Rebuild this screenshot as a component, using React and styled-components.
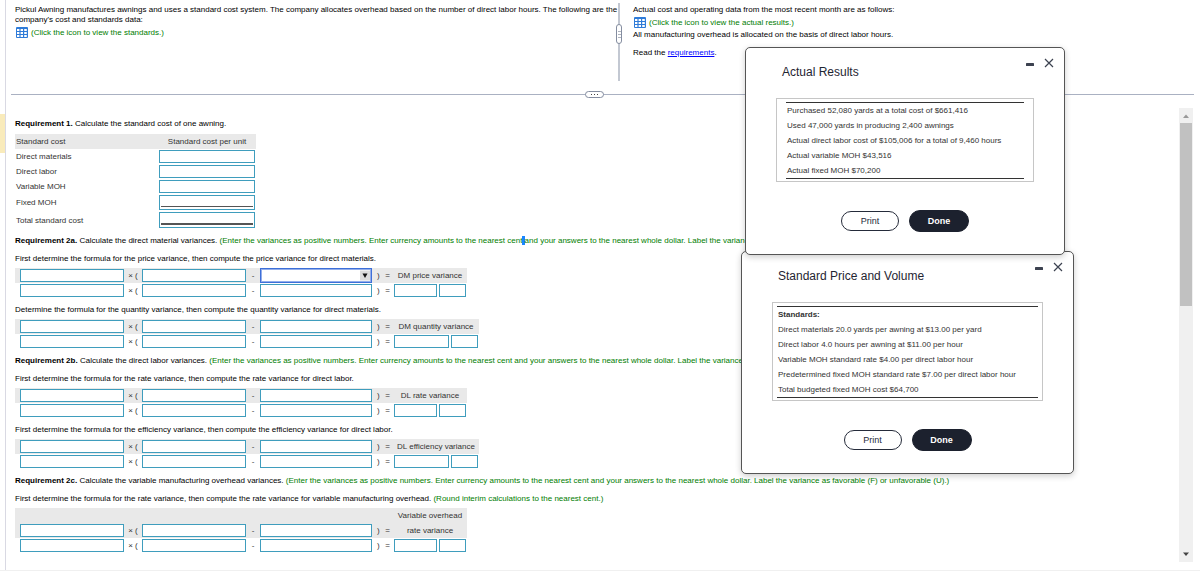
import React from "react";
import styled, { createGlobalStyle } from "styled-components";

const costRows = [
  { label: "Direct materials", height: 15 },
  { label: "Direct labor", height: 15 },
  { label: "Variable MOH", height: 15 },
  { label: "Fixed MOH", height: 17, rule: "single" },
  { label: "Total standard cost", height: 18, rule: "double" },
];

const actualResults = [
  "Purchased 52,080 yards at a total cost of $661,416",
  "Used 47,000 yards in producing 2,400 awnings",
  "Actual direct labor cost of $105,006 for a total of 9,460 hours",
  "Actual variable MOH $43,516",
  "Actual fixed MOH $70,200",
];

const standards = [
  "Direct materials 20.0 yards per awning at $13.00 per yard",
  "Direct labor 4.0 hours per awning at $11.00 per hour",
  "Variable MOH standard rate $4.00 per direct labor hour",
  "Predetermined fixed MOH standard rate $7.00 per direct labor hour",
  "Total budgeted fixed MOH cost $64,700",
];

const TableIcon = () => (
  <svg width="12" height="11" viewBox="0 0 12 11" aria-hidden="true">
    <rect width="12" height="11" rx="1" fill="#2f7bd8" />
    <path
      d="M1 2h2.4v2H1zM4.6 2h2.4v2H4.6zM8.2 2h2.6v2H8.2zM1 5h2.4v2H1zM4.6 5h2.4v2H4.6zM8.2 5h2.6v2H8.2zM1 8h2.4v2H1zM4.6 8h2.4v2H4.6zM8.2 8h2.6v2H8.2z"
      fill="#fff"
    />
  </svg>
);

const Formula = ({ name, lines, wide, open }) => (
  <FormulaBox>
    {lines && (
      <FormulaRow $shaded $wide={wide}>
        <ResultName>{lines[0]}</ResultName>
      </FormulaRow>
    )}
    <FormulaRow $shaded $wide={wide}>
      <Answer aria-label={`${name} term 1`} />
      <Sign>× (</Sign>
      <Answer aria-label={`${name} term 2`} />
      <Sign>-</Sign>
      {open ? (
        <Picker>
          <select aria-label={`${name} term 3`}>
            <option> </option>
          </select>
          <Arrow viewBox="0 0 10 10" aria-hidden="true">
            <rect width="10" height="10" fill="#dcdcdc" />
            <path d="M2.5 3h5L5 7.5z" fill="#111" />
          </Arrow>
        </Picker>
      ) : (
        <Answer aria-label={`${name} term 3`} />
      )}
      <Sign $spread>
        <span>)</span>
        <span>=</span>
      </Sign>
      <ResultName>{lines ? lines[1] : name}</ResultName>
    </FormulaRow>
    <FormulaRow $wide={wide}>
      <Answer aria-label={`${name} amount 1`} />
      <Sign>× (</Sign>
      <Answer aria-label={`${name} amount 2`} />
      <Sign>-</Sign>
      <Answer aria-label={`${name} amount 3`} />
      <Sign $spread>
        <span>)</span>
        <span>=</span>
      </Sign>
      <Result>
        <Answer aria-label={`${name} result`} />
        <Answer aria-label={`${name} F or U`} />
      </Result>
    </FormulaRow>
  </FormulaBox>
);

const WindowButtons = () => (
  <Controls>
    <IconButton aria-label="Minimize">
      <svg width="10" height="10" viewBox="0 0 10 10">
        <rect x="1" y="5" width="8" height="3" rx="0.6" fill="#3c4250" />
      </svg>
    </IconButton>
    <IconButton aria-label="Close">
      <svg width="10" height="10" viewBox="0 0 10 10">
        <path d="M1 1l8 8M9 1L1 9" stroke="#3c4250" strokeWidth="1.2" />
      </svg>
    </IconButton>
  </Controls>
);

const App = () => {
  return (
    <Page>
      <GlobalStyle />
      <Rail>
        <Marker />
      </Rail>
      <Content>
        <Intro>
          <IntroText>
            <p>
              Pickul Awning manufactures awnings and uses a standard cost
              system. The company allocates overhead based on the number of
              direct labor hours. The following are the
              <br />
              company's cost and standards data:
            </p>
            <IconLine>
              <TableIcon /> <Hint>(Click the icon to view the standards.)</Hint>
            </IconLine>
          </IntroText>
          <Splitter>
            <Grip $vertical>
              <i />
              <i />
              <i />
            </Grip>
          </Splitter>
          <IntroText>
            <p>
              Actual cost and operating data from the most recent month are as
              follows:
            </p>
            <IconLine>
              <TableIcon />{" "}
              <Hint>(Click the icon to view the actual results.)</Hint>
            </IconLine>
            <p>
              All manufacturing overhead is allocated on the basis of direct
              labor hours.
            </p>
            <ReadLine>
              Read the <a href="#requirements">requirements</a>.
            </ReadLine>
          </IntroText>
        </Intro>
        <Divider>
          <Grip>
            <i />
            <i />
            <i />
          </Grip>
        </Divider>
        <Lower>
          <Work>
            <Text>
              <b>Requirement 1.</b> Calculate the standard cost of one awning.
            </Text>
            <CostTable>
              <thead>
                <tr>
                  <th>Standard cost</th>
                  <th>Standard cost per unit</th>
                </tr>
              </thead>
              <tbody>
                {costRows.map(({ label, height, rule }) => (
                  <CostRow key={label} $height={height}>
                    <td>{label}</td>
                    <td>
                      <CostCell>
                        <Answer aria-label={label} />
                        {rule && <Rule $double={rule === "double"} />}
                      </CostCell>
                    </td>
                  </CostRow>
                ))}
              </tbody>
            </CostTable>
            <TextBlock>
              <Text>
                <b>Requirement 2a.</b> Calculate the direct material variances.{" "}
                <Hint>
                  (Enter the variances as positive numbers. Enter currency
                  amounts to the nearest cent<Mark> </Mark>and your answers to
                  the nearest whole dollar. Label the variance as favorable (F)
                  or unfavorable (U).)
                </Hint>
              </Text>
              <Text>
                First determine the formula for the price variance, then
                compute the price variance for direct materials.
              </Text>
            </TextBlock>
            <Formula name="DM price variance" open />
            <TextBlock>
              <Text>
                Determine the formula for the quantity variance, then compute
                the quantity variance for direct materials.
              </Text>
            </TextBlock>
            <Formula name="DM quantity variance" wide />
            <TextBlock>
              <Text>
                <b>Requirement 2b.</b> Calculate the direct labor variances.{" "}
                <Hint>
                  (Enter the variances as positive numbers. Enter currency
                  amounts to the nearest cent and your answers to the nearest
                  whole dollar. Label the variance as favorable (F) or
                  unfavorable (U).)
                </Hint>
              </Text>
              <Text>
                First determine the formula for the rate variance, then compute
                the rate variance for direct labor.
              </Text>
            </TextBlock>
            <Formula name="DL rate variance" />
            <TextBlock>
              <Text>
                First determine the formula for the efficiency variance, then
                compute the efficiency variance for direct labor.
              </Text>
            </TextBlock>
            <Formula name="DL efficiency variance" wide />
            <TextBlock>
              <Text>
                <b>Requirement 2c.</b> Calculate the variable manufacturing
                overhead variances.{" "}
                <Hint>
                  (Enter the variances as positive numbers. Enter currency
                  amounts to the nearest cent and your answers to the nearest
                  whole dollar. Label the variance as favorable (F) or
                  unfavorable (U).)
                </Hint>
              </Text>
              <Text>
                First determine the formula for the rate variance, then compute
                the rate variance for variable manufacturing overhead.{" "}
                <Hint>(Round interim calculations to the nearest cent.)</Hint>
              </Text>
            </TextBlock>
            <Formula
              name="Variable overhead rate variance"
              lines={["Variable overhead", "rate variance"]}
            />
          </Work>
          <Scrollbar>
            <svg width="14" height="15" viewBox="0 0 14 15">
              <path d="M4 10l3-3.5L10 10z" fill="#999" />
            </svg>
            <Thumb />
            <svg width="14" height="15" viewBox="0 0 14 15">
              <path d="M4 5.5h6L7 9z" fill="#444" />
            </svg>
          </Scrollbar>
        </Lower>
      </Content>

      <StandardsDialog role="dialog" aria-label="Standard Price and Volume">
        <WindowButtons />
        <DialogTitle>Standard Price and Volume</DialogTitle>
        <StandardsBox>
          <Lines>
            <li>
              <b>Standards:</b>
            </li>
            {standards.map((line) => (
              <li key={line}>{line}</li>
            ))}
          </Lines>
        </StandardsBox>
        <Actions>
          <PrintButton>Print</PrintButton>
          <DoneButton>Done</DoneButton>
        </Actions>
      </StandardsDialog>

      <ActualDialog role="dialog" aria-label="Actual Results">
        <WindowButtons />
        <DialogTitle>Actual Results</DialogTitle>
        <ActualBox>
          <Lines>
            {actualResults.map((line) => (
              <li key={line}>{line}</li>
            ))}
          </Lines>
        </ActualBox>
        <Actions>
          <PrintButton>Print</PrintButton>
          <DoneButton>Done</DoneButton>
        </Actions>
      </ActualDialog>
    </Page>
  );
};

const GlobalStyle = createGlobalStyle`
  * {
    box-sizing: border-box;
  }
  body {
    margin: 0;
    background: #fff;
    color: #000;
    font-family: "Liberation Sans", Arial, sans-serif;
    font-size: 8px;
  }
  p, h2, ul {
    margin: 0;
    padding: 0;
  }
  button, input, select {
    font-family: inherit;
  }
`;

const Page = styled.div`
  position: relative;
  display: flex;
  min-height: 100vh;
  overflow: hidden;
  border-bottom: 1px solid #f0f0f0;
`;
const Rail = styled.aside`
  flex: none;
  width: 6px;
  padding-top: 114px;
  border-right: 1px solid #d9d9e3;
`;
const Marker = styled.div`
  height: 39px;
  background: #f9ebbb;
`;
const Content = styled.main`
  flex: 1;
  min-width: 0;
  padding: 3px 6px 0 5px;
`;
const Intro = styled.section`
  display: grid;
  grid-template-columns: minmax(0, 605fr) 6px minmax(0, 572fr);
  height: 78px;
`;
const IntroText = styled.div`
  padding: 2px 0 0 4px;
  line-height: 10px;
  white-space: nowrap;

  & + div + & {
    padding-left: 11px;
  }
`;
const IconLine = styled.div`
  display: flex;
  align-items: center;
  gap: 3px;
  height: 15px;
  padding-left: 1px;
`;
const Hint = styled.span`
  color: #007d00;
`;
const ReadLine = styled.p`
  margin-top: 8px;

  a {
    color: #0000ff;
  }
`;
const Splitter = styled.div`
  display: flex;
  justify-content: center;
  padding-top: 21px;
  background: linear-gradient(#c3c8d2, #c3c8d2) center / 2px 100% no-repeat;
`;
const Grip = styled.div`
  display: flex;
  flex-direction: ${({ $vertical }) => ($vertical ? "column" : "row")};
  justify-content: center;
  align-items: center;
  gap: 2px;
  width: ${({ $vertical }) => ($vertical ? "6px" : "19px")};
  height: ${({ $vertical }) => ($vertical ? "20px" : "7px")};
  border: 1px solid #848da0;
  border-radius: 4px;
  background: #fff;

  i {
    width: ${({ $vertical }) => ($vertical ? "3px" : "1px")};
    height: 1px;
    background: ${({ $vertical }) => ($vertical ? "#b0b5c0" : "#444")};
  }
`;
const Divider = styled.div`
  display: flex;
  justify-content: center;
  align-items: center;
  height: 27px;
  padding-right: 16px;
  background: linear-gradient(#aab1c2, #aab1c2) center / 100% 1px no-repeat;
`;
const Lower = styled.section`
  display: flex;
`;
const Work = styled.div`
  flex: 1;
  min-width: 0;
  padding: 7px 0 17px 4px;
  overflow: hidden;
`;
const Text = styled.p`
  line-height: 18px;
  white-space: nowrap;
`;
const TextBlock = styled.div`
  padding-top: 3px;
`;
const Mark = styled.span`
  background: #1a86ff;
`;
const Answer = styled.input`
  display: block;
  width: 100%;
  min-width: 0;
  height: 13px;
  padding: 0 2px;
  border: 1px solid #3f9dbd;
  border-radius: 0;
  background: #fff;
  font-size: 8px;
`;
const CostTable = styled.table`
  width: 241px;
  margin-top: 1px;
  border-collapse: collapse;
  color: #333;

  th {
    height: 15px;
    padding: 0 1px;
    background: #e9e9e9;
    font-weight: 400;
    text-align: left;
  }
  th + th {
    width: 98px;
    text-align: center;
  }
  td {
    padding: 0 1px;
  }
`;
const CostRow = styled.tr`
  height: ${({ $height }) => $height}px;

  ${Answer} {
    height: ${({ $height }) => $height - 2}px;
  }
`;
const CostCell = styled.div`
  position: relative;
`;
const Rule = styled.span`
  position: absolute;
  right: 2px;
  bottom: 3px;
  left: 2px;
  border-bottom: ${({ $double }) => ($double ? "2px" : "1px")} solid #555;
`;
const FormulaBox = styled.div`
  display: flex;
  flex-direction: column;
  align-items: flex-start;
  color: #333;
`;
const FormulaRow = styled.div`
  display: grid;
  grid-template-columns: 104px 18px 104px 14px 112px 22px ${({ $wide }) =>
      $wide ? "84px" : "72px"};
  align-items: center;
  height: 15px;
  padding: 0 1px 0 5px;
  background: ${({ $shaded }) => ($shaded ? "#e9e9e9" : "transparent")};
`;
const Sign = styled.span`
  display: flex;
  justify-content: ${({ $spread }) => ($spread ? "space-between" : "center")};
  padding: ${({ $spread }) => ($spread ? "0 4px 0 5px" : "0")};
`;
const ResultName = styled.span`
  grid-column: 7;
  text-align: center;
  white-space: nowrap;
`;
const Result = styled.div`
  display: grid;
  grid-template-columns: 1fr 27px;
  gap: 2px;
`;
const Picker = styled.div`
  position: relative;

  select {
    display: block;
    width: 100%;
    height: 15px;
    border: 1px solid #3d6fd8;
    outline: 1px solid #93aeea;
    outline-offset: -2px;
    border-radius: 0;
    background: #fff;
    appearance: none;
    font-size: 8px;
  }
`;
const Arrow = styled.svg`
  position: absolute;
  top: 2px;
  right: 2px;
  width: 10px;
  height: 11px;
  pointer-events: none;
`;
const Scrollbar = styled.div`
  flex: none;
  display: flex;
  flex-direction: column;
  width: 14px;
  height: calc(100vh - 117px);
  margin-right: 1px;
  background: #f0f0f0;
`;
const Thumb = styled.div`
  height: 183px;
  margin: 0 1px auto;
  background: #c1c1c1;
`;
const Dialog = styled.div`
  position: absolute;
  padding: 10px 30px 22px;
  border: 1px solid #555;
  border-radius: 5px;
  background: #fff;
  box-shadow: 0 2px 6px rgba(0, 0, 0, 0.2);
`;
const ActualDialog = styled(Dialog)`
  top: 47px;
  left: 745px;
  width: 320px;
`;
const StandardsDialog = styled(Dialog)`
  top: 251px;
  left: 741px;
  width: 333px;
`;
const Controls = styled.div`
  display: flex;
  justify-content: flex-end;
  gap: 9px;
  height: 6px;
  margin-right: -20px;
`;
const IconButton = styled.button`
  display: block;
  width: 10px;
  height: 10px;
  padding: 0;
  border: 0;
  background: none;

  svg {
    display: block;
  }
`;
const DialogTitle = styled.h2`
  margin-left: 6px;
  color: #1f2532;
  font-size: 12px;
  font-weight: 400;
  line-height: 16px;
`;
const Box = styled.div`
  margin: 18px 0 28px;
  border: 1px solid #c6c6c6;
`;
const ActualBox = styled(Box)`
  padding: 3px 9px 2px;
`;
const StandardsBox = styled(Box)`
  padding: 3px 4px 2px;
`;
const Lines = styled.ul`
  border-top: 1px solid #333;
  border-bottom: 1px solid #333;
  color: #333;
  line-height: 15px;
  list-style: none;
  white-space: nowrap;

  li {
    padding-left: 1px;
  }
`;
const Actions = styled.div`
  display: flex;
  justify-content: center;
  align-items: center;
  gap: 10px;
`;
const PrintButton = styled.button`
  width: 58px;
  height: 20px;
  padding: 0;
  border: 1px solid #252b3a;
  border-radius: 11px;
  background: #fff;
  color: #252b3a;
  font-size: 9px;
`;
const DoneButton = styled(PrintButton)`
  width: 60px;
  height: 22px;
  border-color: #1c212e;
  background: #1c212e;
  color: #fff;
  font-weight: 700;
`;

export default App;
